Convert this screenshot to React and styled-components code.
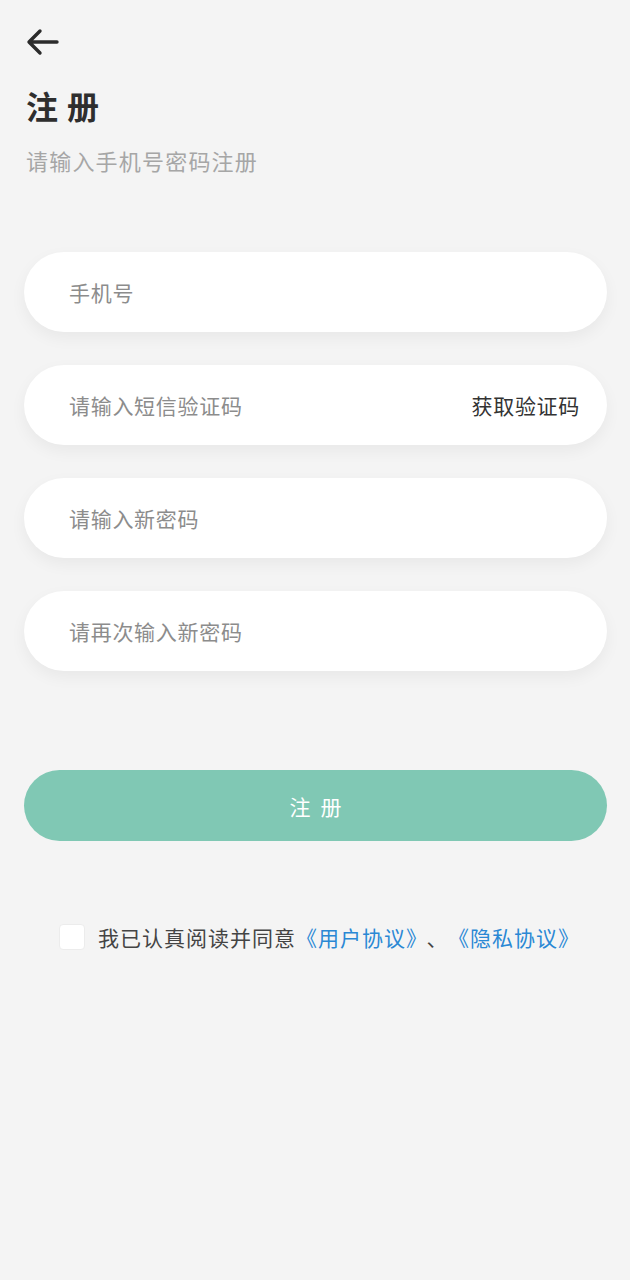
import React, { useState } from "react";
import styled, { createGlobalStyle } from "styled-components";

const GlobalStyle = createGlobalStyle`
  html, body {
    margin: 0;
    padding: 0;
    background: #f4f4f4;
  }
  body {
    font-family: "Noto Sans CJK SC", "Noto Sans", sans-serif;
  }
`;

const Page = styled.div`
  min-height: 1280px;
  background: #f4f4f4;
  padding: 24px 23px 0 24px;
  box-sizing: border-box;
`;

const BackButton = styled.button`
  display: flex;
  align-items: center;
  justify-content: center;
  width: 36px;
  height: 36px;
  padding: 0;
  border: none;
  background: none;
  cursor: pointer;
`;

const Title = styled.h1`
  margin: 24px 0 0 2px;
  font-size: 32px;
  line-height: 42px;
  font-weight: 700;
  color: #2e2e2e;
  letter-spacing: 9px;
`;

const Subtitle = styled.p`
  margin: 20px 0 0 2px;
  font-size: 22px;
  line-height: 28px;
  color: #a6a6a6;
  letter-spacing: 1.2px;
`;

const Form = styled.div`
  display: flex;
  flex-direction: column;
  gap: 33px;
  margin-top: 78px;
`;

const Field = styled.div`
  display: flex;
  align-items: center;
  height: 80px;
  padding: 0 27px 0 43px;
  background: #fff;
  border-radius: 40px;
  box-shadow: 0 6px 16px rgba(0, 0, 0, 0.05);
`;

const Input = styled.input`
  flex: 1;
  min-width: 0;
  border: none;
  outline: none;
  background: transparent;
  font-family: inherit;
  font-size: 21px;
  letter-spacing: 0.7px;
  color: #333;
  &::placeholder {
    color: #8c8c8c;
  }
`;

const CodeLink = styled.span`
  font-size: 21px;
  letter-spacing: 0.7px;
  color: #333;
  white-space: nowrap;
`;

const Submit = styled.button`
  display: block;
  width: 100%;
  height: 71px;
  margin-top: 99px;
  padding: 0 0 0 10px;
  border: none;
  border-radius: 36px;
  background: #80c8b4;
  color: #fff;
  font-family: inherit;
  font-size: 21px;
  letter-spacing: 10px;
  cursor: pointer;
`;

const Agreement = styled.label`
  display: flex;
  align-items: center;
  gap: 13px;
  margin: 81px 0 0 35px;
  font-size: 21px;
  letter-spacing: 1px;
  color: #444;
`;

const Check = styled.span`
  width: 26px;
  height: 26px;
  border-radius: 4px;
  background: ${(p) => (p.$on ? "#80c8b4" : "#fff")};
  border: 1px solid #ececec;
  box-sizing: border-box;
  flex-shrink: 0;
`;

const Link = styled.span`
  color: #2a88d4;
`;

const Sep = styled.span`
  margin: 0 10px 0 9px;
`;

function App() {
  const [agreed, setAgreed] = useState(false);

  return (
    <Page>
      <GlobalStyle />
      <BackButton aria-label="返回">
        <svg width="34" height="30" viewBox="0 0 34 30" fill="none">
          <path
            d="M32 15H5M15 4L4 15l11 11"
            stroke="#2b2b2b"
            strokeWidth="3.4"
            strokeLinecap="round"
            strokeLinejoin="round"
          />
        </svg>
      </BackButton>
      <Title>注册</Title>
      <Subtitle>请输入手机号密码注册</Subtitle>

      <Form>
        <Field>
          <Input placeholder="手机号" />
        </Field>
        <Field>
          <Input placeholder="请输入短信验证码" />
          <CodeLink>获取验证码</CodeLink>
        </Field>
        <Field>
          <Input type="password" placeholder="请输入新密码" />
        </Field>
        <Field>
          <Input type="password" placeholder="请再次输入新密码" />
        </Field>
      </Form>

      <Submit>注册</Submit>

      <Agreement onClick={() => setAgreed(!agreed)}>
        <Check $on={agreed} />
        <span>
          我已认真阅读并同意<Link>《用户协议》</Link>
          <Sep>、</Sep>
          <Link>《隐私协议》</Link>
        </span>
      </Agreement>
    </Page>
  );
}

export default App;
